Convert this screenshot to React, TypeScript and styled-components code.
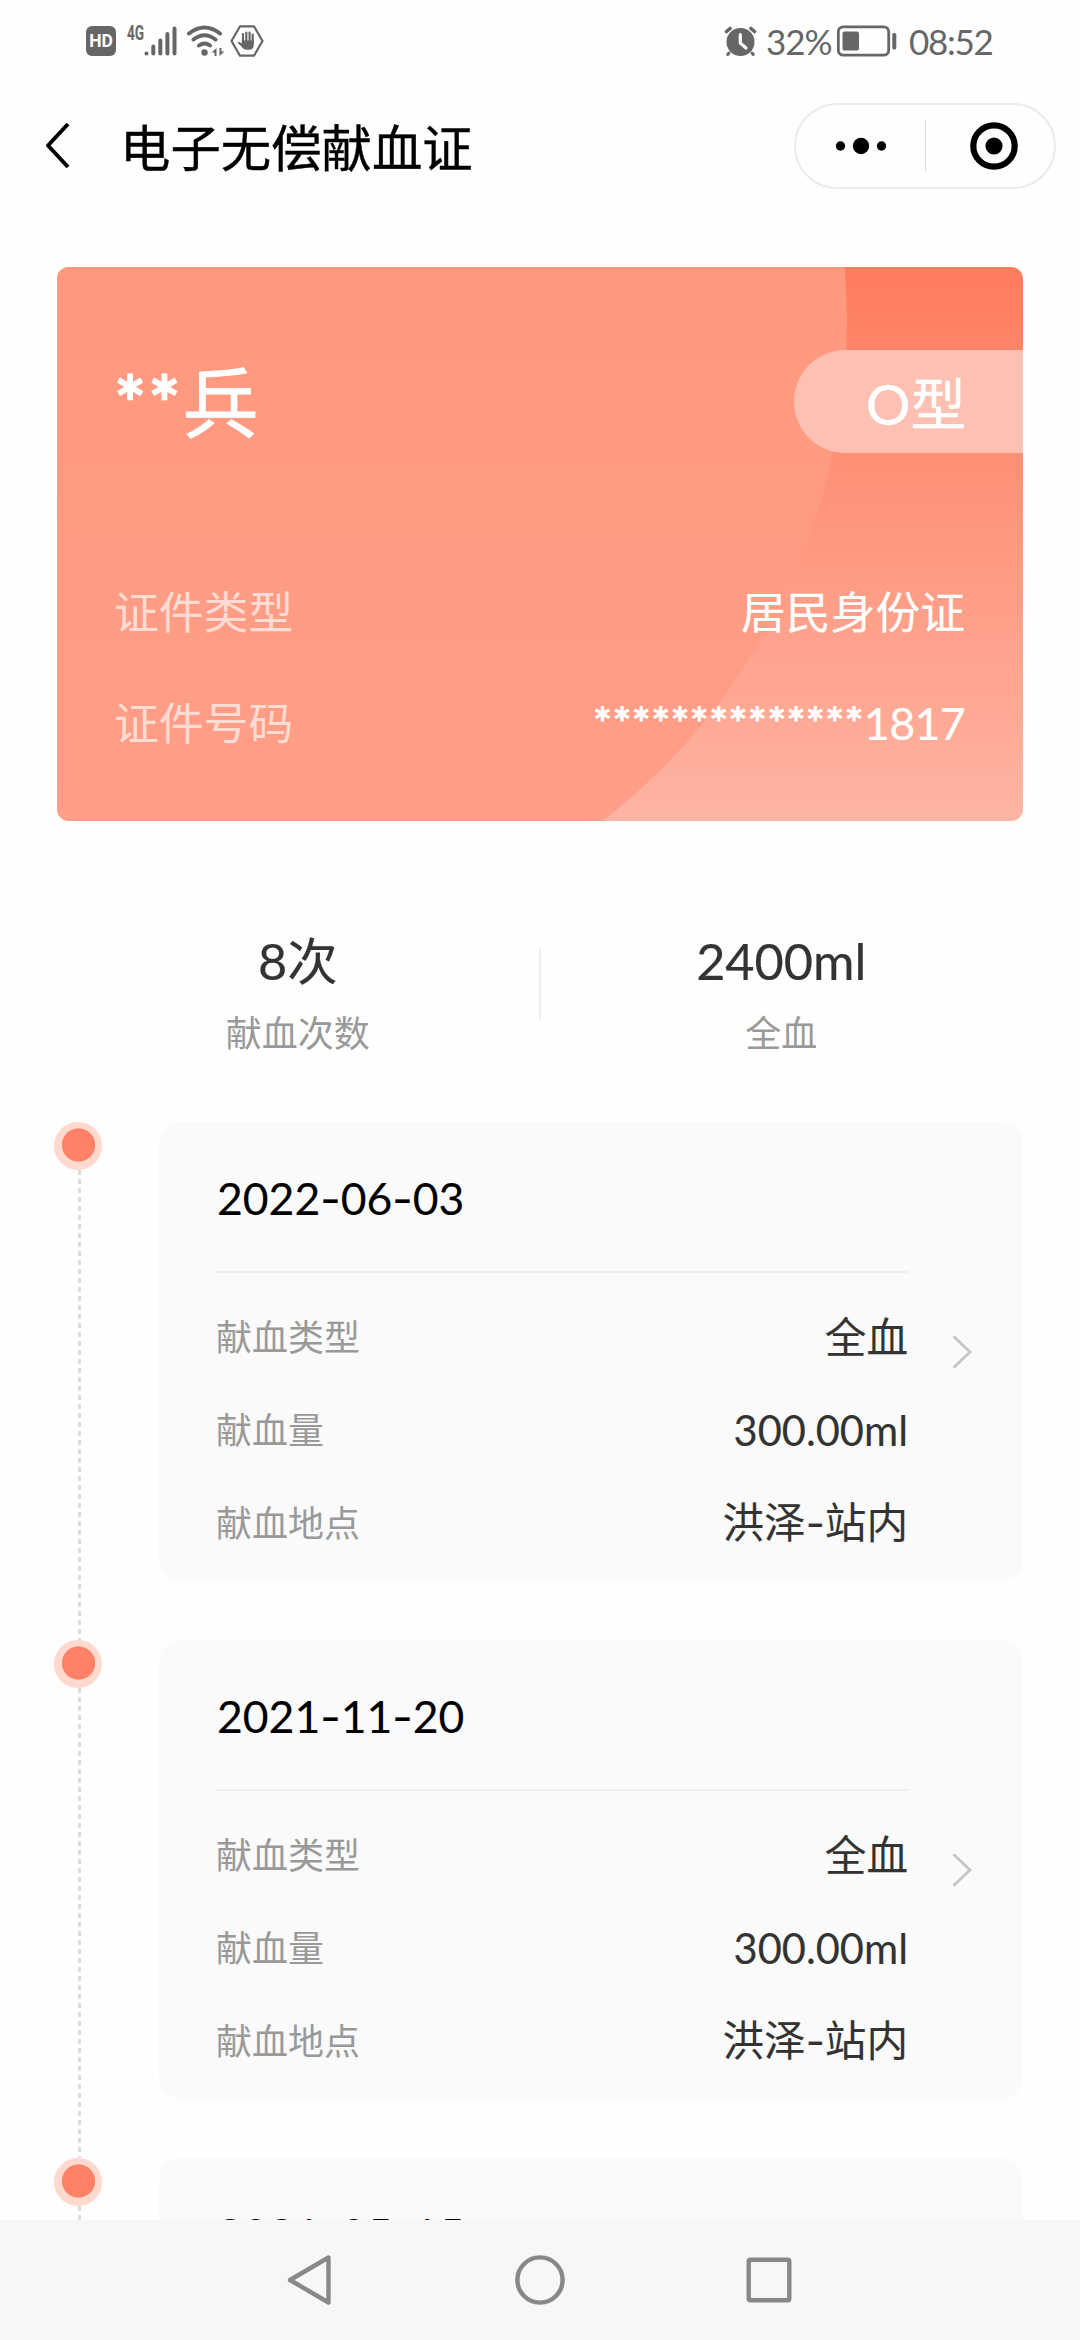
import React from "react";
import styled, { createGlobalStyle } from "styled-components";

const GlobalStyle = createGlobalStyle`
  *, *::before, *::after { box-sizing: border-box; }
  html, body { margin: 0; padding: 0; background: #fff; }
  body { font-family: Lato, "Noto Sans CJK SC", sans-serif; overflow: hidden; }
  svg { display: block; flex: none; }
`;

const Screen = styled.div`
  width: 1080px;
  height: 2340px;
  display: flex;
  flex-direction: column;
  overflow: hidden;
  background: #fefefe;
`;

const StatusBar = styled.header`
  height: 82px;
  flex: none;
  padding: 0 88px 0 86px;
  display: flex;
  align-items: center;
  justify-content: space-between;
  color: #666;
`;

const StatusGroup = styled.div`
  display: flex;
  align-items: center;
  height: 82px;
`;

const StatusIcon = styled.span<{ $gap: number }>`
  margin-left: ${(p) => p.$gap}px;
`;

const HdBadge = styled.span`
  width: 30px;
  height: 30px;
  border-radius: 6px;
  background: #666;
  color: #fff;
  font: 700 17.5px/31px Roboto, sans-serif;
  text-align: center;
`;

const NetworkLabel = styled.span`
  width: 17px;
  height: 32px;
  margin-left: 11px;
  font: 700 19.5px/17px Roboto, sans-serif;
  transform: scaleX(0.7);
  transform-origin: left top;
`;

const StatusText = styled.span<{ $width: number; $gap: number; $spacing: number }>`
  width: ${(p) => p.$width}px;
  margin-left: ${(p) => p.$gap}px;
  font-size: 35px;
  line-height: 40px;
  letter-spacing: ${(p) => p.$spacing}px;
  white-space: nowrap;
`;

const TitleBar = styled.div`
  height: 128px;
  flex: none;
  padding: 0 24px 0 43px;
  display: flex;
  align-items: center;
`;

const Title = styled.h1`
  margin: 0 auto 0 47px;
  padding-top: 3px;
  font-size: 50.4px;
  font-weight: 400;
  line-height: 60px;
  color: #000;
  -webkit-text-stroke: 0.4px #000;
`;

const Capsule = styled.div`
  width: 262px;
  height: 86px;
  border: 2px solid #ebebeb;
  border-radius: 43px;
  display: flex;
  align-items: center;
`;

const CapsuleButton = styled.button`
  width: 129px;
  height: 52px;
  padding: 0;
  border: 0;
  background: none;
  display: flex;
  align-items: center;
  justify-content: center;
  & + & { border-left: 1px solid #dcdcdc; padding-left: 7px; }
`;

const IdCard = styled.section`
  flex: none;
  height: 554px;
  margin: 57px 57px 0;
  border-radius: 12px;
  color: #fff;
  background: linear-gradient(#ff7c5e, #ffb4a3);
  overflow: hidden;
  isolation: isolate;
  position: relative;
  &::before {
    content: "";
    position: absolute;
    z-index: -1;
    left: -478px;
    top: -580px;
    width: 1268px;
    height: 1268px;
    border-radius: 50%;
    background: linear-gradient(#ff987e 580px, #ff9e89 1134px);
  }
`;

const CardHead = styled.div`
  display: flex;
  justify-content: space-between;
  padding: 83px 0 0 57px;
  height: 289px;
`;

const HolderName = styled.div`
  padding-top: 2px;
  font-size: 76px;
  line-height: 102px;
  -webkit-text-stroke: 0.8px #fff;
  white-space: nowrap;
`;

const Stars = styled.span<{ $spacing: number; $weight: number }>`
  letter-spacing: ${(p) => p.$spacing}px;
  -webkit-text-stroke: ${(p) => p.$weight}px #fff;
`;

const BloodType = styled.div`
  width: 229px;
  height: 103px;
  padding-right: 57px;
  border-radius: 52px 0 0 52px;
  background: #fec0b2;
  font-size: 55.5px;
  line-height: 108px;
  text-align: right;
  -webkit-text-stroke: 0.5px #fff;
`;

const CardRow = styled.div`
  height: 111px;
  padding: 0 58px 0 57px;
  display: flex;
  align-items: center;
  justify-content: space-between;
  font-size: 44.8px;
  line-height: 60px;
`;

const CardLabel = styled.span`
  color: #ffdcd3;
`;

const CardValue = styled.span`
  -webkit-text-stroke: 0.2px #fff;
`;

const Digits = styled.span`
  letter-spacing: -0.7px;
`;

const Summary = styled.section`
  flex: none;
  height: 301px;
  padding: 109px 58px 0 57px;
  display: flex;
`;

const Stat = styled.div`
  flex: 1;
  display: flex;
  flex-direction: column;
  align-items: center;
`;

const StatValue = styled.div`
  font-size: 50.4px;
  line-height: 62px;
  color: #333;
  -webkit-text-stroke: 0.2px #333;
`;

const StatLabel = styled.div`
  margin-top: 16px;
  font-size: 36px;
  line-height: 50px;
  color: #999;
`;

const StatDivider = styled.div`
  width: 2px;
  height: 72px;
  margin-top: 18px;
  background: #eee;
`;

const Timeline = styled.ol`
  flex: 1;
  min-height: 0;
  margin: 0;
  padding: 0 57px 0 54px;
  list-style: none;
  overflow: hidden;
`;

const Entry = styled.li`
  height: 518px;
  display: flex;
  align-items: flex-start;
`;

const Rail = styled.div`
  width: 105px;
  height: 518px;
  display: flex;
  flex-direction: column;
`;

const Dot = styled.div`
  width: 48px;
  height: 48px;
  flex: none;
  border-radius: 50%;
  background: radial-gradient(circle at 24.5px 23px, #ff8166 16.2px, #ffd8ce 17px);
`;

const Dashes = styled.div`
  flex: 1;
  width: 3px;
  margin-left: 24px;
  background: repeating-linear-gradient(#dcdcdc 0 5px, transparent 5px 9px);
`;

const RecordCard = styled.article`
  width: 864px;
  height: 459px;
  border-radius: 22px;
  background: #fafafa;
  padding: 0 50px 0 57px;
  display: flex;
  align-items: center;
  justify-content: space-between;
`;

const RecordBody = styled.div`
  width: 692px;
  height: 459px;
`;

const RecordDate = styled.h2`
  height: 151px;
  margin: 0;
  padding-left: 1px;
  border-bottom: 2px solid #efefef;
  font-size: 44.5px;
  font-weight: 400;
  line-height: 151px;
  color: #000;
  -webkit-text-stroke: 0.1px #000;
`;

const Dash = styled.span`
  font-family: Inter, sans-serif;
`;

const Fields = styled.dl`
  margin: 0;
  padding-top: 17px;
`;

const Field = styled.div`
  height: 93px;
  display: flex;
  align-items: center;
  justify-content: space-between;
`;

const FieldName = styled.dt`
  font-size: 36px;
  line-height: 50px;
  color: #999;
`;

const FieldValue = styled.dd`
  margin: 0;
  font-size: 41.6px;
  line-height: 56px;
  color: #333;
  -webkit-text-stroke: 0.1px #333;
`;

const NavBar = styled.nav`
  flex: none;
  height: 120px;
  background: #f7f7f7;
  display: flex;
  align-items: center;
  justify-content: center;
  gap: 179px;
`;

const Signal = () => (
  <svg width="33" height="32" viewBox="0 0 33 32" stroke="#666" strokeWidth="4" strokeLinecap="round">
    <path d="M2.500 28.500v.1M9.300 21.500v7M16.300 15.500v13M23.400 9v19.500M30.500 3.500v25" />
  </svg>
);

const Wifi = () => (
  <svg width="40" height="32" viewBox="0 0 40 32" fill="none" stroke="#666" strokeWidth="4" strokeLinecap="round">
    <path d="M3 8.500Q18.500 -3.500 34 8.500M7.500 14.500Q18.500 6 29.500 14.500M13 20.500Q18.500 16.500 24 20.500" />
    <circle cx="18.500" cy="27.500" r="3.200" fill="#666" stroke="none" />
    <path d="M25.500 27.500l5-4.500v8h-2v-3.500zM38.500 26.500l-5 4.500v-8h2v3.500z" fill="#666" stroke="none" />
  </svg>
);

const HandShield = () => (
  <svg width="34" height="32" viewBox="0 0 34 32" fill="none" stroke="#666" strokeLinecap="round">
    <path d="M10 1.300h14L32.500 16 24 30.700H10L1.500 16z" strokeWidth="2.200" strokeLinejoin="round" />
    <path d="M13 9v8M16.300 7.500v9M19.600 7.500v9M22.700 9.500v8" strokeWidth="2.200" />
    <path d="M11.800 15.500h12v4q0 5.300-5 5.300h-2q-3.200 0-5.300-3.300l-3.600-3.600q0-1.500 1.600-1l2.300 1.600z" fill="#666" stroke="none" />
  </svg>
);

const Alarm = () => (
  <svg width="33" height="31" viewBox="0 0 33 31" fill="none" strokeLinecap="round">
    <circle cx="16.500" cy="16" r="14" fill="#666" />
    <path d="M2.500 5.500l3.500-3M30.500 5.500l-3.500-3" stroke="#666" strokeWidth="3.600" />
    <path d="M5 27l-1.300 1.500M28 27l1.300 1.500" stroke="#666" strokeWidth="3" />
    <path d="M16.300 8.500v8.500l5.700 5" stroke="#fff" strokeWidth="3.200" strokeLinejoin="round" />
  </svg>
);

const Battery = () => (
  <svg width="60" height="32" viewBox="0 0 60 32" fill="none">
    <rect x="1.300" y="1.800" width="50.400" height="28.400" rx="5" stroke="#666" strokeWidth="2.800" />
    <rect x="5.500" y="6.500" width="16.500" height="19" rx="2" fill="#666" />
    <rect x="55.300" y="8" width="4" height="16.500" rx="1.500" fill="#666" />
  </svg>
);

const BackIcon = () => (
  <svg width="30" height="50" viewBox="0 0 30 50" fill="none" stroke="#000" strokeWidth="4" strokeLinejoin="round">
    <path d="M25 3L5 24.500 25 46" />
  </svg>
);

const MoreIcon = () => (
  <svg width="52" height="18" viewBox="0 0 52 18">
    <circle cx="5.500" cy="9" r="4.700" />
    <circle cx="26" cy="9" r="8.200" />
    <circle cx="46.500" cy="9" r="4.700" />
  </svg>
);

const TargetIcon = () => (
  <svg width="48" height="48" viewBox="0 0 48 48">
    <circle cx="24" cy="24" r="20.700" fill="none" stroke="#000" strokeWidth="6.200" />
    <circle cx="24" cy="24" r="8.600" />
  </svg>
);

const ArrowIcon = () => (
  <svg width="22" height="36" viewBox="0 0 22 36" fill="none" stroke="#c4c4c4" strokeWidth="2.700">
    <path d="M2.500 2.300L19 18 2.500 33.700" />
  </svg>
);

const records = [
  { date: "2022-06-03", kind: "全血", volume: "300.00ml", place: "洪泽-站内" },
  { date: "2021-11-20", kind: "全血", volume: "300.00ml", place: "洪泽-站内" },
  { date: "2021-05-15", kind: "全血", volume: "300.00ml", place: "洪泽-站内" },
];

const Dashed = ({ text }: { text: string }) => (
  <>
    {text.split("-").map((part, i) => (
      <React.Fragment key={i}>
        {i > 0 && <Dash>-</Dash>}
        {part}
      </React.Fragment>
    ))}
  </>
);

export default function App() {
  return (
    <Screen>
      <GlobalStyle />
      <StatusBar>
        <StatusGroup>
          <HdBadge>HD</HdBadge>
          <NetworkLabel>4G</NetworkLabel>
          <StatusIcon $gap={0}><Signal /></StatusIcon>
          <StatusIcon $gap={9}><Wifi /></StatusIcon>
          <StatusIcon $gap={4}><HandShield /></StatusIcon>
        </StatusGroup>
        <StatusGroup>
          <Alarm />
          <StatusText $width={62} $gap={9} $spacing={-1}>32%</StatusText>
          <StatusIcon $gap={9}><Battery /></StatusIcon>
          <StatusText $width={83} $gap={12} $spacing={-1.3}>08:52</StatusText>
        </StatusGroup>
      </StatusBar>

      <TitleBar>
        <BackIcon />
        <Title>电子无偿献血证</Title>
        <Capsule>
          <CapsuleButton aria-label="更多"><MoreIcon /></CapsuleButton>
          <CapsuleButton aria-label="关闭"><TargetIcon /></CapsuleButton>
        </Capsule>
      </TitleBar>

      <IdCard>
        <CardHead>
          <HolderName><Stars $spacing={2} $weight={2.4}>**</Stars>兵</HolderName>
          <BloodType>O型</BloodType>
        </CardHead>
        <CardRow>
          <CardLabel>证件类型</CardLabel>
          <CardValue>居民身份证</CardValue>
        </CardRow>
        <CardRow>
          <CardLabel>证件号码</CardLabel>
          <CardValue><Stars $spacing={0.3} $weight={1.2}>**************</Stars><Digits>1817</Digits></CardValue>
        </CardRow>
      </IdCard>

      <Summary>
        <Stat>
          <StatValue>8次</StatValue>
          <StatLabel>献血次数</StatLabel>
        </Stat>
        <StatDivider />
        <Stat>
          <StatValue>2400ml</StatValue>
          <StatLabel>全血</StatLabel>
        </Stat>
      </Summary>

      <Timeline>
        {records.map((r) => (
          <Entry key={r.date}>
            <Rail>
              <Dot />
              <Dashes />
            </Rail>
            <RecordCard>
              <RecordBody>
                <RecordDate><Dashed text={r.date} /></RecordDate>
                <Fields>
                  <Field><FieldName>献血类型</FieldName><FieldValue>{r.kind}</FieldValue></Field>
                  <Field><FieldName>献血量</FieldName><FieldValue>{r.volume}</FieldValue></Field>
                  <Field><FieldName>献血地点</FieldName><FieldValue><Dashed text={r.place} /></FieldValue></Field>
                </Fields>
              </RecordBody>
              <ArrowIcon />
            </RecordCard>
          </Entry>
        ))}
      </Timeline>

      <NavBar>
        <svg width="50" height="52" viewBox="0 0 50 52" fill="none" stroke="#888" strokeWidth="4.400" strokeLinejoin="round">
          <path d="M42.500 3.500v45L4 26z" />
        </svg>
        <svg width="50" height="50" viewBox="0 0 50 50" fill="none" stroke="#888" strokeWidth="4.400">
          <circle cx="25" cy="25" r="22.600" />
        </svg>
        <svg width="50" height="50" viewBox="0 0 50 50" fill="none" stroke="#888" strokeWidth="4.400">
          <rect x="4.700" y="4.700" width="40.600" height="40.600" rx="1.500" />
        </svg>
      </NavBar>
    </Screen>
  );
}
